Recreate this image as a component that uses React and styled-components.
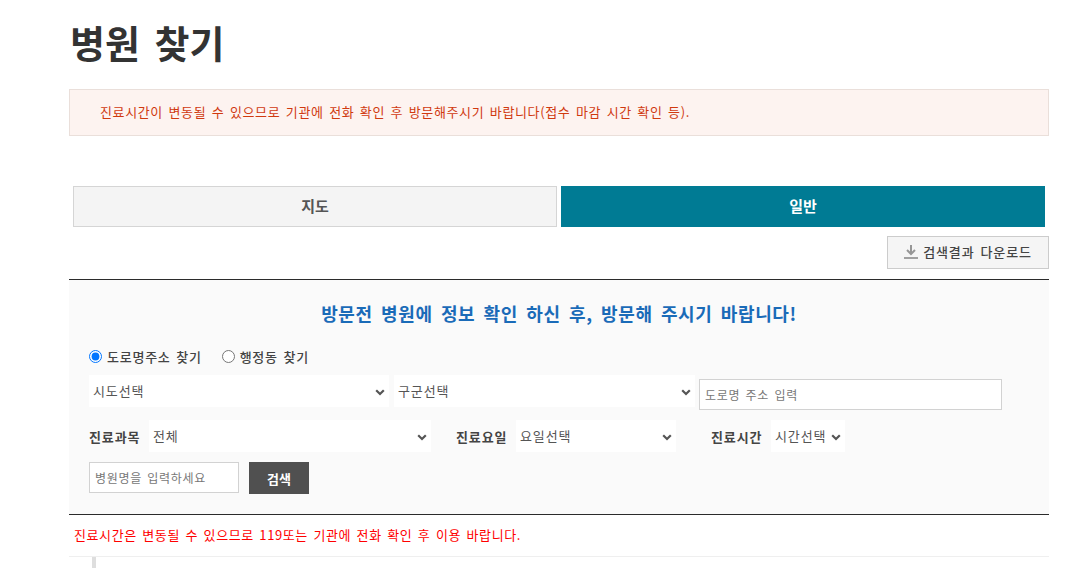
import React from "react";
import styled, { createGlobalStyle } from "styled-components";

const GlobalStyle = createGlobalStyle`
  html, body {
    margin: 0;
    padding: 0;
    height: 568px;
    overflow: hidden;
    background: #fff;
    font-family: "Noto Sans CJK KR", "Noto Sans", sans-serif;
    color: #333;
  }
  * { box-sizing: border-box; }
`;

const chevron = encodeURIComponent(
  '<svg xmlns="http://www.w3.org/2000/svg" width="10" height="7" viewBox="0 0 10 7"><path d="M1.200 1.200 5 5l3.800-3.800" fill="none" stroke="#555" stroke-width="2.200"/></svg>'
);

const Page = styled.div`
  width: 980px;
  margin-left: 69px;
`;

const Title = styled.h1`
  margin: 0;
  height: 89px;
  padding: 16px 0 0 1px;
  font-size: 38px;
  line-height: 52px;
  font-weight: 700;
  word-spacing: 6px;
  color: #333;
`;

const Alert = styled.div`
  height: 47px;
  padding-left: 30px;
  border: 1px solid #eadfda;
  background: #fdf3f0;
  color: #d0390f;
  font-size: 13px;
  line-height: 44px;
  letter-spacing: 0.63px;
  word-spacing: 2px;
`;

const Tabs = styled.div`
  display: flex;
  gap: 4px;
  margin: 50px 4px 0;
`;

const Tab = styled.div`
  flex: 1;
  height: 41px;
  line-height: 37px;
  text-align: center;
  font-size: 15px;
  font-weight: 700;
  border: 1px solid ${(p) => (p.$active ? "#007b94" : "#d5d5d5")};
  background: ${(p) => (p.$active ? "#007b94" : "#f4f4f4")};
  color: ${(p) => (p.$active ? "#fff" : "#555")};
`;

const Toolbar = styled.div`
  display: flex;
  justify-content: flex-end;
  margin-top: 9px;
`;

const DownloadButton = styled.button`
  display: flex;
  align-items: center;
  justify-content: center;
  gap: 5px;
  width: 162px;
  height: 33px;
  padding: 0 0 2px;
  border: 1px solid #cccccc;
  background: #f5f5f5;
  color: #444;
  font-family: inherit;
  font-size: 13px;
  font-weight: 500;
  letter-spacing: 0.9px;
  word-spacing: 2px;
`;

const SearchPanel = styled.section`
  height: 236px;
  margin-top: 10px;
  padding: 0 20px;
  border-top: 1px solid #2b2b2b;
  border-bottom: 1px solid #2b2b2b;
  background: #fafafa;
`;

const PanelTitle = styled.h2`
  margin: 0;
  padding-top: 20px;
  height: 62px;
  text-align: center;
  font-size: 18px;
  line-height: 26px;
  font-weight: 700;
  letter-spacing: 0.63px;
  word-spacing: 3.6px;
  color: #1a6bb8;
`;

const RadioRow = styled.div`
  display: flex;
  gap: 20px;
  height: 28px;
  align-items: center;
`;

const RadioLabel = styled.label`
  display: flex;
  align-items: center;
  gap: 5px;
  font-size: 13px;
  font-weight: 500;
  letter-spacing: 0.75px;
  word-spacing: 2px;
  color: #444;
`;

const Radio = styled.input`
  margin: 0;
  width: 13px;
  height: 13px;
`;

const Row = styled.div`
  display: flex;
  align-items: ${(p) => p.$align || "center"};
  margin-top: ${(p) => p.$top || 0}px;
`;

const Select = styled.select`
  appearance: none;
  width: ${(p) => p.$w}px;
  height: 32px;
  margin-left: ${(p) => p.$left || 0}px;
  padding: 0 0 2px 4px;
  border: 0;
  border-radius: 0;
  background: #fff url("data:image/svg+xml,${chevron}") no-repeat right 4px top 14px;
  font-family: inherit;
  font-size: 13px;
  letter-spacing: 0.9px;
  color: #555;
`;

const FieldLabel = styled.span`
  width: ${(p) => p.$w}px;
  margin-left: ${(p) => p.$left || 0}px;
  font-size: 13px;
  font-weight: 700;
  letter-spacing: 0.9px;
  color: #444;
`;

const TextInput = styled.input`
  width: ${(p) => p.$w}px;
  height: 31px;
  margin: ${(p) => p.$margin || 0};
  padding: 0 5px;
  border: 1px solid #d2d2d2;
  border-radius: 0;
  background: #fff;
  font-family: inherit;
  font-size: 12px;
  letter-spacing: 0.7px;
  word-spacing: 2px;
  color: #555;
  &::placeholder { color: #777; }
`;

const SearchButton = styled.button`
  width: 60px;
  height: 32px;
  margin-left: 10px;
  padding: 0;
  border: 0;
  background: #505050;
  color: #fff;
  font-family: inherit;
  font-size: 13px;
  font-weight: 700;
`;

const Notice = styled.p`
  height: 42px;
  margin: 0;
  padding-left: 5px;
  border-bottom: 1px solid #efefef;
  color: #f00;
  font-size: 13px;
  line-height: 39px;
  letter-spacing: 0.6px;
  word-spacing: 2px;
`;

const ResultList = styled.div`
  height: 20px;
  margin-left: 23px;
  border-left: 4px solid #dedede;
`;

function DownloadIcon() {
  return (
    <svg width="14" height="14" viewBox="0 0 14 14" fill="none" aria-hidden="true">
      <path d="M7 0v8.500M3 5l4 4 4-4" stroke="#969696" strokeWidth="2" />
      <path d="M0 13h14" stroke="#a0a0a0" strokeWidth="2" />
    </svg>
  );
}

export default function App() {
  return (
    <Page>
      <GlobalStyle />
      <Title>병원 찾기</Title>
      <Alert>진료시간이 변동될 수 있으므로 기관에 전화 확인 후 방문해주시기 바랍니다(접수 마감 시간 확인 등).</Alert>

      <Tabs>
        <Tab>지도</Tab>
        <Tab $active>일반</Tab>
      </Tabs>

      <Toolbar>
        <DownloadButton>
          <DownloadIcon />
          검색결과 다운로드
        </DownloadButton>
      </Toolbar>

      <SearchPanel>
        <PanelTitle>방문전 병원에 정보 확인 하신 후, 방문해 주시기 바랍니다!</PanelTitle>
        <RadioRow>
          <RadioLabel>
            <Radio type="radio" name="addr" defaultChecked />
            도로명주소 찾기
          </RadioLabel>
          <RadioLabel>
            <Radio type="radio" name="addr" />
            행정동 찾기
          </RadioLabel>
        </RadioRow>

        <Row $align="flex-start" $top={5}>
          <Select $w={300}><option>시도선택</option></Select>
          <Select $w={301} $left={5}><option>구군선택</option></Select>
          <TextInput $w={303} $margin="4px 0 0 4px" placeholder="도로명 주소 입력" />
        </Row>

        <Row $top={10}>
          <FieldLabel $w={60}>진료과목</FieldLabel>
          <Select $w={282}><option>전체</option></Select>
          <FieldLabel $w={60} $left={25}>진료요일</FieldLabel>
          <Select $w={160}><option>요일선택</option></Select>
          <FieldLabel $w={60} $left={35}>진료시간</FieldLabel>
          <Select $w={74}><option>시간선택</option></Select>
        </Row>

        <Row $top={10} $align="flex-start">
          <TextInput $w={150} placeholder="병원명을 입력하세요" />
          <SearchButton>검색</SearchButton>
        </Row>
      </SearchPanel>

      <Notice>진료시간은 변동될 수 있으므로 119또는 기관에 전화 확인 후 이용 바랍니다.</Notice>
      <ResultList />
    </Page>
  );
}
